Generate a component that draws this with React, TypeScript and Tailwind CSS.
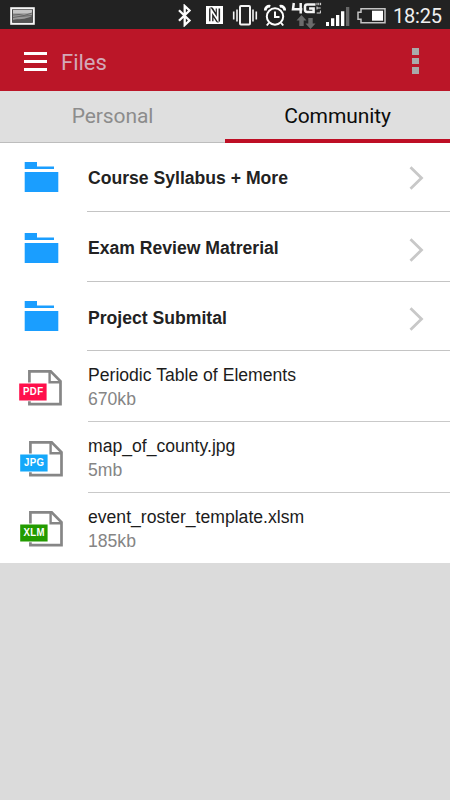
import React from 'react';

interface Folder {
  name: string;
  rowClass: string;
  iconClass: string;
  textClass: string;
  chevronClass: string;
}

interface FileItem {
  name: string;
  size: string;
  type: string;
  badgeColor: string;
  rowClass: string;
  iconClass: string;
}

const folders: Folder[] = [
  { name: 'Course Syllabus + More', rowClass: 'h-[69px]', iconClass: 'mt-[19px]', textClass: 'mt-[24px]', chevronClass: 'mt-[23px]' },
  { name: 'Exam Review Matrerial', rowClass: 'h-[70px]', iconClass: 'mt-[21px]', textClass: 'mt-[25px]', chevronClass: 'mt-[26px]' },
  { name: 'Project Submital', rowClass: 'h-[69px]', iconClass: 'mt-[19px]', textClass: 'mt-[25px]', chevronClass: 'mt-[25px]' },
];

const files: FileItem[] = [
  { name: 'Periodic Table of Elements', size: '670kb', type: 'PDF', badgeColor: '#ff0f4b', rowClass: 'h-[71px]', iconClass: 'mt-[18px] ml-[19px]' },
  { name: 'map_of_county.jpg', size: '5mb', type: 'JPG', badgeColor: '#14a8fa', rowClass: 'h-[71px]', iconClass: 'mt-[18px] ml-[20px]' },
  { name: 'event_roster_template.xlsm', size: '185kb', type: 'XLM', badgeColor: '#239b00', rowClass: 'h-[70px]', iconClass: 'mt-[17px] ml-[20px]' },
];

const FolderIcon = ({ className }: { className: string }) => (
  <svg className={`ml-[24px] shrink-0 ${className}`} width="35" height="30" viewBox="0 0 35 30" fill="#1a9eff">
    <path d="M.7 0H13v4.5h17V7H.7zM.7 10h33.6v20H.7z" />
  </svg>
);

const FileIcon = ({ type, color, className }: { type: string; color: string; className: string }) => (
  <svg className={`shrink-0 ${className}`} width="44" height="37" viewBox="0 0 44 37">
    <path d="M10.4 13.5V2.3h21.3l9.8 10v22.9H10.4v-3" fill="none" stroke="#868686" strokeWidth="2.7" />
    <path d="M30.6 2v11.2H42" fill="none" stroke="#868686" strokeWidth="2.4" />
    <rect x="0.2" y="14.5" width="27.4" height="17" fill={color} />
    <text
      transform="translate(14.2 26.2) scale(.84 1)"
      fill="#fff"
      fontSize="11.5"
      fontWeight="700"
      letterSpacing=".5"
      textAnchor="middle"
      fontFamily="'Liberation Sans', sans-serif"
    >
      {type}
    </text>
  </svg>
);

const Chevron = ({ className }: { className: string }) => (
  <svg className={`ml-auto mr-[25px] shrink-0 ${className}`} width="16" height="24" viewBox="0 0 16 24" fill="none" stroke="#c8c8c8" strokeWidth="2.8">
    <path d="M1.5 1.2 12.5 12 1.5 22.8" />
  </svg>
);

const StatusBar = () => (
  <div className="flex h-[29px] items-start bg-[#222]">
    {/* Screenshot notification */}
    <svg className="ml-[10px] mt-[7px]" width="25" height="18" viewBox="0 0 25 18">
      <rect x="1.2" y="1.2" width="22.6" height="15.6" fill="#222" stroke="#f6f6f6" strokeWidth="2" />
      <rect x="3" y="2.8" width="19" height="12.4" fill="#999" />
      <rect x="3" y="2.8" width="19" height="3.5" fill="#c4c4c4" />
      <path d="M3 8 9 7.5l5 1 8-2.5M3 10.5l6-1 13-1" stroke="#666" strokeWidth="1" fill="none" />
      <path d="M3 13c5-1.5 12 0 19-4v6.2H3z" fill="#555" />
    </svg>
    {/* Bluetooth */}
    <svg className="ml-[143px] mt-[4px]" width="14" height="23" viewBox="0 0 14 23" fill="none" stroke="#fff" strokeWidth="2.3">
      <path d="m1 6.2 10.5 10.3L6.7 21V2l4.8 4.5L1 16.8" />
    </svg>
    {/* NFC */}
    <svg className="ml-[13px] mt-[5px]" width="19" height="20" viewBox="0 0 19 20">
      <path d="M1 1h17v18H1z" fill="#fff" />
      <path d="M6.3 16.3V4.5l6.6 10.8V3.5" fill="none" stroke="#222" strokeWidth="4.4" strokeLinejoin="round" />
      <path d="M6.3 19V5l6.4 9.8V1" fill="none" stroke="#fff" strokeWidth="1.7" />
    </svg>
    {/* Vibrate */}
    <svg className="ml-[8px] mt-[4px]" width="26" height="22" viewBox="0 0 26 22" fill="none" stroke="#f4f4f4">
      <rect x="8" y="2" width="10" height="18.5" rx="1" strokeWidth="2" />
      <path d="M5 5.5v12M21 5.5v12M1.7 7.5v8M24.3 7.5v8" strokeWidth="1.6" />
    </svg>
    {/* Alarm */}
    <svg className="ml-[5px] mt-[4px]" width="24" height="23" viewBox="0 0 24 23" fill="none" stroke="#fff" strokeWidth="2">
      <circle cx="12" cy="12.5" r="8.2" />
      <path d="M12 7.5v5.5h4.5M5.8 19 3.8 21.5M18.2 19l2 2.5" />
      <path d="M2.3 6.5a4 4 0 0 1 5-4.2M21.7 6.5a4 4 0 0 0-5-4.2" strokeWidth="2.8" />
    </svg>
    {/* 4G LTE */}
    <svg className="ml-[3px] mt-[2px]" width="32" height="27" viewBox="0 0 32 27">
      <path d="M3.8 1 3 7.3h9.3M10.7 1v10.5M25.5 2.4h-8.3A2.2 2.2 0 0 0 15 4.6v3.2a2.2 2.2 0 0 0 2.2 2.2h6.4V6.5h-4.5" fill="none" stroke="#f4f4f4" strokeWidth="2.5" />
      <path d="M26.7 11h4M30.4 11V8.5M30.7 6H27M27 7.5v-3M27 3.2V.8M28.8 3.2V.8M30.6 3.2V.8" stroke="#ddd" strokeWidth="1" />
      <path d="m11.5 13 5 5.5h-2.8V24H9.3v-5.5H6.5z" fill="#6b6b6b" />
      <path d="M20.5 27l-5-5.5h2.8V16h4.4v5.5h2.8z" fill="#6b6b6b" />
    </svg>
    {/* Signal */}
    <svg className="ml-[4px] mt-[7px]" width="24" height="19" viewBox="0 0 24 19">
      <path d="M0 15h3v4H0zM5 11.3h3.3V19H5zM10 8h3.3v11H10zM15 4.3h3.3V19H15z" fill="#fff" />
      <path d="M20 0h3.3v19H20z" fill="#686868" />
    </svg>
    {/* Battery */}
    <svg className="ml-[7px] mt-[7px]" width="30" height="17" viewBox="0 0 30 17">
      <path d="M4 1.7h24v14H4v-3.5H1V5.3h3z" fill="none" stroke="#c4c4c4" strokeWidth="1.5" />
      <rect x="15" y="3.7" width="11" height="10" fill="#fff" />
    </svg>
    <span className="ml-[6px] mt-[4px] whitespace-nowrap text-[20px] leading-[24px] tracking-[-0.2px] text-[#f0f0f0]">18:25</span>
  </div>
);

const App: React.FC = () => {
  return (
    <div className="h-[800px] w-[450px] overflow-hidden bg-[#dbdbdb] font-['Roboto',sans-serif]">
      <StatusBar />

      {/* Header */}
      <header className="flex h-[62px] items-center bg-[#bb1628]">
        <button className="ml-[24px] mt-[3px] flex w-[23px] flex-col gap-[5px]" aria-label="Menu">
          <span className="h-[3px] w-full bg-white" />
          <span className="h-[3px] w-full bg-white" />
          <span className="h-[3px] w-full bg-white" />
        </button>
        <h1 className="ml-[14px] mt-[5px] text-[22px] leading-[26px] text-[#d3a9b8]">Files</h1>
        <button className="ml-auto mr-[31px] mt-[2px] flex flex-col gap-[3px]" aria-label="More options">
          <span className="h-[6.5px] w-[7px] bg-[#a9a9a9]" />
          <span className="h-[6.5px] w-[7px] bg-[#a9a9a9]" />
          <span className="h-[6.5px] w-[7px] bg-[#a9a9a9]" />
        </button>
      </header>

      {/* Tabs */}
      <nav className="flex h-[52px] bg-[#dfdfdf] text-center text-[21px] leading-[50px]">
        <div className="w-[225px] border-b border-[#bdbdbd] tracking-[-0.1px] text-[#8c8c8c]">Personal</div>
        <div className="w-[225px] border-b-4 border-[#be0f25] tracking-[-0.1px] text-[#0c0c0c]">Community</div>
      </nav>

      <div className="bg-white font-['Liberation_Sans',sans-serif]">
        {folders.map((folder) => (
          <div key={folder.name} className={`flex ${folder.rowClass}`}>
            <FolderIcon className={folder.iconClass} />
            <div className="ml-[28px] flex flex-1 border-b border-[#c4c4c4]">
              <span className={`ml-[1px] whitespace-nowrap text-[17.6px] font-bold leading-[22px] text-[#222] ${folder.textClass}`}>
                {folder.name}
              </span>
              <Chevron className={folder.chevronClass} />
            </div>
          </div>
        ))}

        {files.map((file, index) => (
          <div key={file.name} className={`flex ${file.rowClass}`}>
            <div className="w-[88px] shrink-0">
              <FileIcon type={file.type} color={file.badgeColor} className={file.iconClass} />
            </div>
            <div className={`flex-1 pt-[12px] ${index < files.length - 1 ? 'border-b border-[#c9c9c9]' : ''}`}>
              <p className="text-[17.6px] leading-[24px] text-[#1c1c1c]">{file.name}</p>
              <p className="text-[17.6px] leading-[24px] text-[#858585]">{file.size}</p>
            </div>
          </div>
        ))}
      </div>
    </div>
  );
};

export default App;
